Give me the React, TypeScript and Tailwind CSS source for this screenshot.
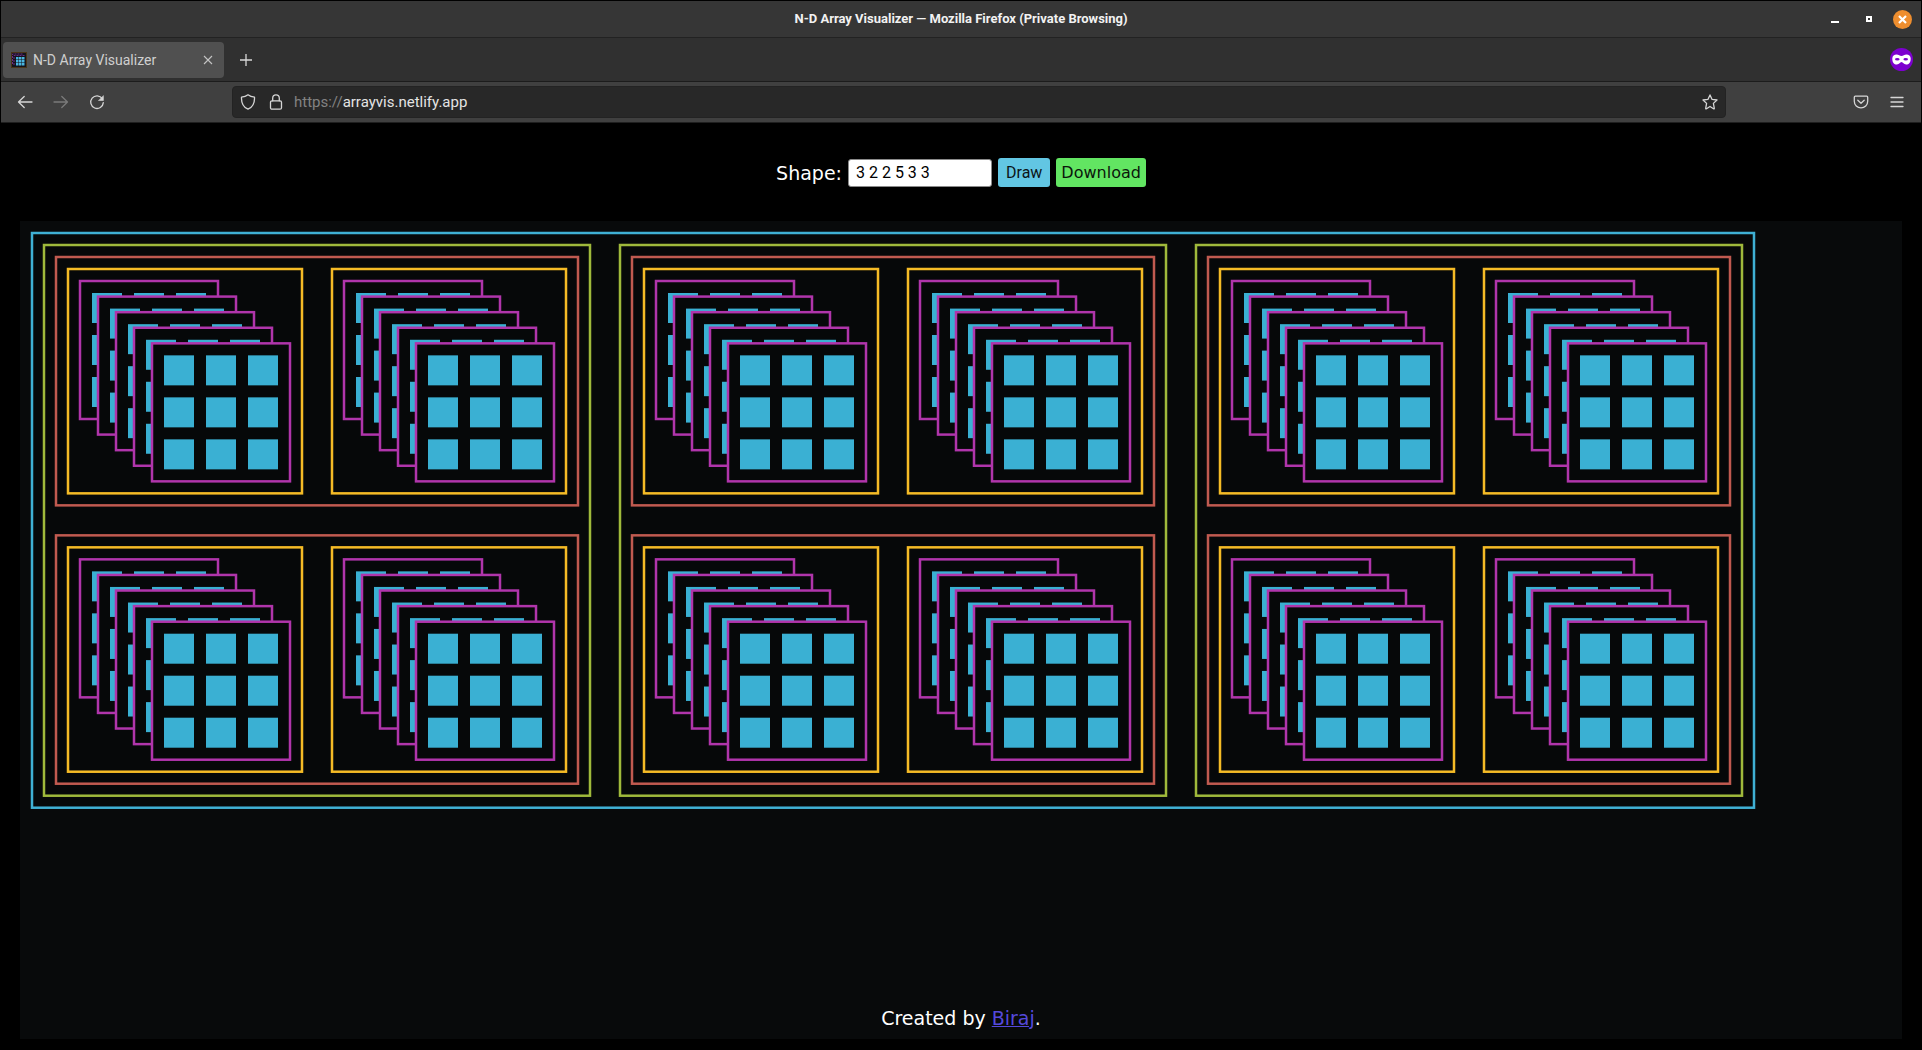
import { Fragment, useState } from "react";
import type { ReactNode } from "react";

const CELL = 30;
const PAD = 12;
const GAP = 30;
const LAYER_DX = 18;
const LAYER_DY = LAYER_DX * Math.sin(Math.PI / 3);
const CYAN = "#3ab0d3";
const MAGENTA = "#b035ab";
const BACKDROP = "#060809";
const BORDERS = ["#f5bb26", "#c05a50", "#9fb93b", "#3fb0d4"];

type Drawn = { w: number; h: number; render: (x: number, y: number) => ReactNode };

function frame(x: number, y: number, w: number, h: number, stroke: string) {
  return <rect x={x} y={y} width={w} height={h} fill={BACKDROP} stroke={stroke} strokeWidth={2.5} />;
}

/* The last two dimensions: a bordered grid of cells. */
function matrix(rows: number, cols: number): Drawn {
  const w = cols * (CELL + PAD) + PAD;
  const h = rows * (CELL + PAD) + PAD;
  return {
    w,
    h,
    render: (x, y) => (
      <>
        {frame(x, y, w, h, MAGENTA)}
        {Array.from({ length: rows * cols }, (_, i) => (
          <rect
            key={i}
            x={x + PAD + (i % cols) * (CELL + PAD)}
            y={y + PAD + Math.floor(i / cols) * (CELL + PAD)}
            width={CELL}
            height={CELL}
            fill={CYAN}
          />
        ))}
      </>
    ),
  };
}

/* Repeats a child in a frame: as an overlapping stack, a row or a column. */
function repeat(child: Drawn, count: number, dx: number, dy: number, stroke: string): Drawn {
  const w = child.w + (count - 1) * dx + 2 * PAD;
  const h = child.h + (count - 1) * dy + 2 * PAD;
  return {
    w,
    h,
    render: (x, y) => (
      <>
        {frame(x, y, w, h, stroke)}
        {Array.from({ length: count }, (_, i) => (
          <Fragment key={i}>{child.render(x + PAD + i * dx, y + PAD + i * dy)}</Fragment>
        ))}
      </>
    ),
  };
}

function build(shape: number[]): Drawn {
  const dims = shape.length ? [...shape] : [1];
  const cols = dims.pop() ?? 1;
  const rows = dims.pop() ?? 1;
  let node = matrix(rows, cols);
  let level = 0;
  while (dims.length) {
    const n = dims.pop() as number;
    const stroke = BORDERS[level % BORDERS.length];
    if (level === 0) node = repeat(node, n, LAYER_DX, LAYER_DY, stroke);
    else if (level % 2 === 1) node = repeat(node, n, node.w + GAP, 0, stroke);
    else node = repeat(node, n, 0, node.h + GAP, stroke);
    level += 1;
  }
  return node;
}

function ArrayDrawing({ shape }: { shape: number[] }) {
  const root = build(shape);
  const w = root.w + 2 * PAD;
  const h = Math.ceil(root.h + 2 * PAD);
  return (
    <svg width={w} height={h} viewBox={`0 0 ${w} ${h}`} className="block shrink-0" role="img" aria-label="Array drawing">
      {root.render(PAD, PAD)}
    </svg>
  );
}

function Line({ children, size = 16, className = "" }: { children: ReactNode; size?: number; className?: string }) {
  return (
    <svg
      width={size}
      height={size}
      viewBox="0 0 16 16"
      fill="none"
      stroke="currentColor"
      strokeWidth="1.3"
      strokeLinecap="round"
      strokeLinejoin="round"
      className={className}
      aria-hidden="true"
    >
      {children}
    </svg>
  );
}

function Favicon() {
  return (
    <svg width="16" height="16" viewBox="0 0 16 16" aria-hidden="true">
      <rect width="16" height="16" fill="#4a3518" />
      <rect x="1" y="1" width="14" height="14" fill="#14141c" />
      <path d="M1.500 12V2H12M3 13V3.500h10.500" fill="none" stroke="#6b2b83" strokeWidth="1" strokeDasharray="2 1" />
      {[5, 8, 11].map((y) => [5, 8, 11].map((x) => <rect key={`${x}-${y}`} x={x} y={y} width="2.5" height="2.5" fill="#49b5e0" />))}
    </svg>
  );
}

function TitleBar() {
  return (
    <header className="grid h-[37px] grid-cols-[1fr_auto_1fr] items-center border-b border-[#222222] bg-[#363636]">
      <span />
      <h1 className="font-[Roboto,sans-serif] text-[13px] font-bold text-[#f2f2f2]">
        N-D Array Visualizer — Mozilla Firefox (Private Browsing)
      </h1>
      <div className="flex items-center justify-end gap-[15px] pr-[9px]">
        <button aria-label="Minimize" className="grid size-[19px] place-items-center">
          <svg width="8" height="8" viewBox="0 0 8 8"><path d="M0 6h8v2H0z" fill="#fff" /></svg>
        </button>
        <button aria-label="Maximize" className="grid size-[19px] place-items-center">
          <svg width="6" height="6" viewBox="0 0 6 6"><path d="M0 0h6v6H0zM2 2v2h2V2z" fill="#fff" fillRule="evenodd" /></svg>
        </button>
        <button aria-label="Close" className="grid size-[19px] place-items-center rounded-full bg-[#ee8e2f]">
          <svg width="9" height="9" viewBox="0 0 9 9"><path d="M1 1l7 7M8 1L1 8" stroke="#fff" strokeWidth="2.2" /></svg>
        </button>
      </div>
    </header>
  );
}

function TabStrip() {
  return (
    <div className="flex h-11 items-center border-b border-[#1c1c1c] bg-[#303030] pr-2 pl-0.5">
      <div className="flex h-9 w-[221px] items-center rounded bg-[#505050] pr-2.5 pl-2">
        <Favicon />
        <span className="flex-1 pl-1.5 font-[Roboto,sans-serif] text-[14px] leading-4 text-[#cfcfcf]">N-D Array Visualizer</span>
        <button aria-label="Close tab" className="text-[#c4c4c4]">
          <svg width="12" height="12" viewBox="0 0 12 12" className="block"><path d="M2 2l8 8M10 2l-8 8" stroke="currentColor" strokeWidth="1.1" /></svg>
        </button>
      </div>
      <button aria-label="New tab" className="ml-[15px] text-[#d8d8d8]">
        <svg width="14" height="14" viewBox="0 0 14 14" className="block"><path d="M7 1v12M1 7h12" stroke="currentColor" strokeWidth="1.3" /></svg>
      </button>
      <svg width="23" height="23" viewBox="0 0 23 23" className="ml-auto" role="img" aria-label="Private browsing">
        <circle cx="11.5" cy="11.5" r="11.5" fill="#7d00cf" />
        <path
          d="M2.300 10.500C2.300 7.500 4.300 6.400 6.500 6.400c2.300 0 3.200 1.500 5 1.500s2.700-1.500 5-1.500c2.200 0 4.200 1.100 4.200 4.100 0 4-1.700 6-4.600 6-2.500 0-3-2.500-4.600-2.500s-2.100 2.500-4.600 2.500c-2.900 0-4.600-2-4.600-6z"
          fill="#fff"
        />
        <ellipse cx="7.300" cy="11.300" rx="2.300" ry="1.300" fill="#7d00cf" />
        <ellipse cx="15.700" cy="11.300" rx="2.300" ry="1.300" fill="#7d00cf" />
      </svg>
    </div>
  );
}

function Toolbar() {
  return (
    <div className="flex h-[41px] items-center border-b border-[#1f1f1f] bg-[#404040] px-4 text-[#d6d6d6]">
      <nav aria-label="Navigation" className="flex w-[215px] items-center gap-5">
        <button aria-label="Back"><Line><path d="M1.500 8h13.500M7.200 2.500L1.500 8l5.700 5.500" /></Line></button>
        <button aria-label="Forward" className="text-[#7a7a7a]"><Line><path d="M14.500 8H1M8.800 2.500L14.500 8l-5.700 5.500" /></Line></button>
        <button aria-label="Reload">
          <Line>
            <path d="M13.300 4.700A6.300 6.300 0 1 0 14.300 8.600" />
            <path d="M14.400 2v4.500H9.800z" fill="currentColor" strokeWidth="0.600" />
          </Line>
        </button>
      </nav>
      <div className="flex h-8 flex-1 items-center rounded border border-[#232323] bg-[#282828] px-[7px]">
        <button aria-label="Tracking protection">
          <Line><path d="M8 .8c2 1.500 4.200 2.100 6.500 2.300.3 6-1.800 10-6.500 12.100C3.300 13.100 1.200 9.100 1.500 3.100 3.800 2.900 6 2.300 8 .8z" /></Line>
        </button>
        <button aria-label="Site information" className="ml-3">
          <Line><rect x="2.500" y="6.800" width="11" height="8.400" rx="1.500" /><path d="M4.700 6.800V4.200a3.300 3.300 0 0 1 6.600 0v2.600" /></Line>
        </button>
        <a href="https://arrayvis.netlify.app" className="ml-2.5 font-[Roboto,sans-serif] text-[15px] text-[#e4e4e4]">
          <span className="text-[#828282]">https://</span>arrayvis.netlify.app
        </a>
        <button aria-label="Bookmark" className="ml-auto">
          <Line><path d="M8 .9l2.100 4.500 4.900.6-3.600 3.400.9 4.900c.1.600-.3.800-.8.500L8 12.500l-3.500 2.300c-.5.300-.9.100-.8-.5l.9-4.900L1 6l4.900-.6z" /></Line>
        </button>
      </div>
      <button aria-label="Save to Pocket" className="ml-[127px]">
        <Line><path d="M2.300 2.200h11.400c.6 0 1 .4 1 1v4A6.700 6.700 0 0 1 1.300 7.200v-4c0-.6.400-1 1-1zM4.800 6.300L8 9.300l3.200-3" /></Line>
      </button>
      <button aria-label="Application menu" className="ml-5">
        <Line><path d="M2 3.500h12M2 8h12M2 12.500h12" /></Line>
      </button>
    </div>
  );
}

function parseShape(text: string) {
  return text.trim().split(/\s+/).map(Number).filter((n) => Number.isInteger(n) && n > 0);
}

export default function App() {
  const [text, setText] = useState("3 2 2 5 3 3");
  const [shape, setShape] = useState([3, 2, 2, 5, 3, 3]);

  return (
    <div className="flex min-h-screen flex-col border border-black bg-black font-['DejaVu_Sans',sans-serif] text-white">
      <TitleBar />
      <TabStrip />
      <Toolbar />
      <main className="flex flex-1 flex-col px-[19px] pb-2.5">
        <form
          className="flex items-center justify-center gap-1.5 pt-[35px] pb-[34px]"
          onSubmit={(e) => {
            e.preventDefault();
            setShape(parseShape(text));
          }}
        >
          <label htmlFor="shape" className="text-[19px] leading-7">Shape:</label>
          <input
            id="shape"
            type="text"
            value={text}
            onChange={(e) => setText(e.target.value)}
            className="h-7 w-36 rounded-[3px] border border-[#8a8a8a] bg-white px-[7px] font-[Roboto,sans-serif] text-base text-black"
          />
          <button type="submit" className="h-[29px] rounded-[3px] bg-[#62c6e3] px-2 font-[Roboto,sans-serif] text-base text-[#0c1417]">
            Draw
          </button>
          <button type="button" className="h-[29px] rounded-[3px] bg-[#62e562] px-[5px] text-base text-[#0b160b]">Download</button>
        </form>
        <section className="flex flex-1 flex-col justify-between overflow-hidden bg-[#080a0b]">
          <ArrayDrawing shape={shape} />
          <footer className="pb-[7px] text-center text-[19px] leading-7">
            Created by <a href="#biraj" className="text-[#5549dc] underline">Biraj</a>.
          </footer>
        </section>
      </main>
    </div>
  );
}
